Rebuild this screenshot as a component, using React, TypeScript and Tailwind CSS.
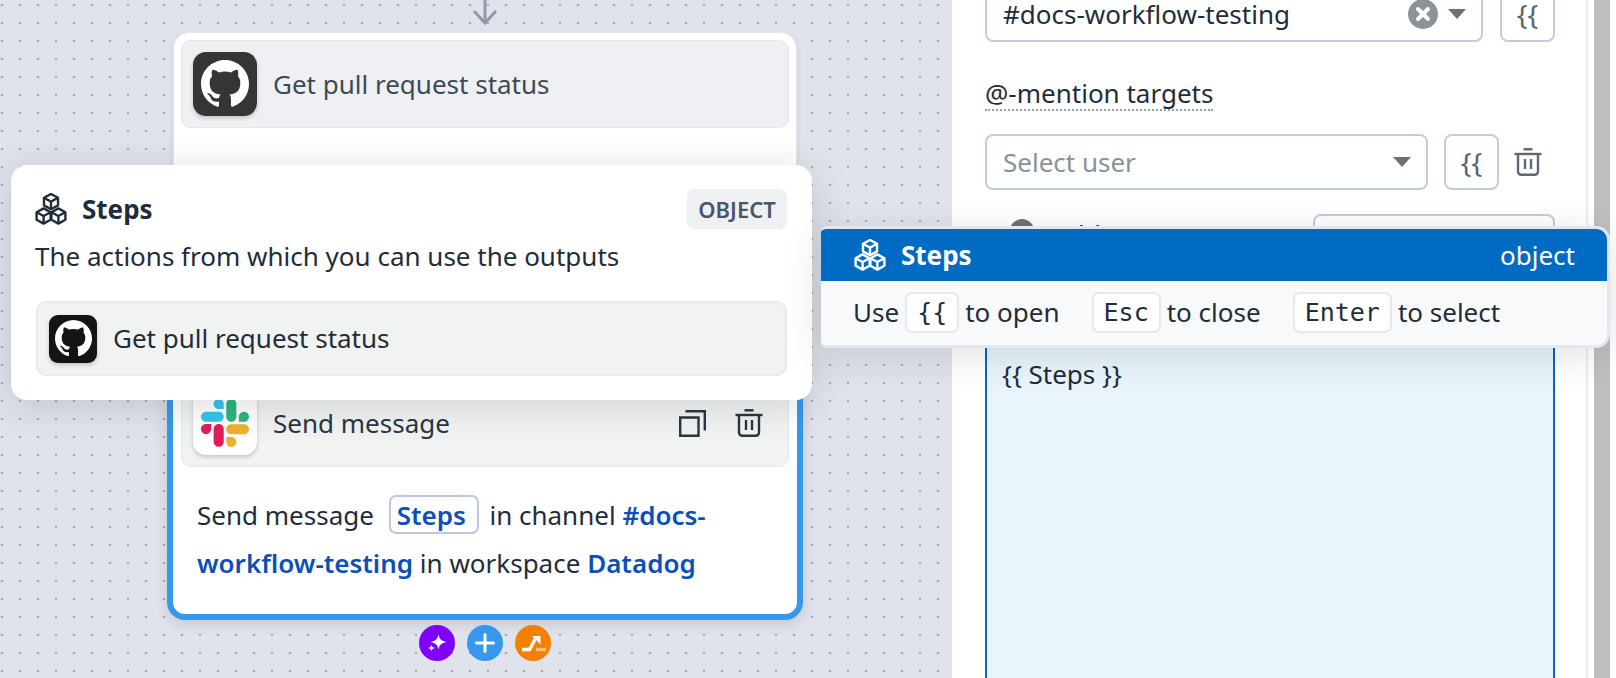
import React from "react";

const GH =
  "M12 0C5.37 0 0 5.37 0 12c0 5.3 3.44 9.8 8.21 11.39.6.11.82-.26.82-.58 0-.29-.01-1.04-.02-2.05-3.34.73-4.04-1.61-4.04-1.61-.55-1.39-1.34-1.76-1.34-1.76-1.09-.75.08-.73.08-.73 1.21.08 1.84 1.24 1.84 1.24 1.07 1.84 2.81 1.31 3.5 1 .11-.78.42-1.31.76-1.61-2.67-.3-5.47-1.33-5.47-5.93 0-1.31.47-2.38 1.24-3.22-.12-.3-.54-1.52.12-3.18 0 0 1.01-.32 3.3 1.23a11.5 11.5 0 0 1 3-.4c1.02 0 2.05.14 3 .4 2.29-1.55 3.3-1.23 3.3-1.23.66 1.66.24 2.88.12 3.18.77.84 1.24 1.91 1.24 3.22 0 4.61-2.81 5.62-5.48 5.92.43.37.81 1.1.81 2.22 0 1.6-.01 2.9-.01 3.29 0 .32.22.7.83.58C20.57 21.8 24 17.3 24 12c0-6.63-5.37-12-12-12z";

function GithubMark({ size }: { size: number }) {
  return (
    <svg width={size} height={size} viewBox="0 0 24 24" fill="#fff">
      <path d={GH} />
    </svg>
  );
}

function Cubes({ color }: { color: string }) {
  const cube = (cx: number, cy: number) => {
    const w = 7;
    const h = 3.8;
    return (
      <g key={`${cx}-${cy}`}>
        <path d={`M${cx} ${cy - 2 * h}L${cx + w} ${cy - h}V${cy + h}L${cx} ${cy + 2 * h}L${cx - w} ${cy + h}V${cy - h}Z`} />
        <path d={`M${cx - w} ${cy - h}L${cx} ${cy}L${cx + w} ${cy - h}M${cx} ${cy}V${cy + 2 * h}`} />
      </g>
    );
  };
  return (
    <svg width="32" height="32" viewBox="0 0 32 32" fill="none" stroke={color} strokeWidth="2.4" strokeLinejoin="round">
      {cube(16, 8.6)}
      {cube(8.6, 23)}
      {cube(23.4, 23)}
    </svg>
  );
}

function Slack() {
  return (
    <svg width="48" height="48" viewBox="0 0 125.4 125.4">
      <path d="M26.4 78.6c0 7.3-5.9 13.2-13.2 13.2S0 85.9 0 78.6s5.9-13.2 13.2-13.2h13.2v13.2zm6.6 0c0-7.3 5.9-13.2 13.2-13.2s13.2 5.9 13.2 13.2v33c0 7.3-5.9 13.2-13.2 13.2S33 118.9 33 111.6v-33z" fill="#E01E5A" />
      <path d="M46.2 26.4c-7.3 0-13.2-5.9-13.2-13.2S38.9 0 46.2 0s13.2 5.9 13.2 13.2v13.2H46.2zm0 6.7c7.3 0 13.2 5.9 13.2 13.2s-5.9 13.2-13.2 13.2H13.2C5.9 59.5 0 53.6 0 46.3s5.9-13.2 13.2-13.2h33z" fill="#36C5F0" />
      <path d="M99 46.3c0-7.3 5.9-13.2 13.2-13.2s13.2 5.9 13.2 13.2-5.9 13.2-13.2 13.2H99V46.3zm-6.6 0c0 7.3-5.9 13.2-13.2 13.2s-13.2-5.9-13.2-13.2v-33C66 5.9 71.9 0 79.2 0s13.2 5.9 13.2 13.2v33.1z" fill="#2EB67D" />
      <path d="M79.2 99c7.3 0 13.2 5.9 13.2 13.2s-5.9 13.2-13.2 13.2S66 119.5 66 112.2V99h13.2zm0-6.6c-7.3 0-13.2-5.9-13.2-13.2S71.9 66 79.2 66h33c7.3 0 13.2 5.9 13.2 13.2s-5.9 13.2-13.2 13.2h-33z" fill="#ECB22E" />
    </svg>
  );
}

function Trash({ color }: { color: string }) {
  return (
    <svg width="28" height="28" viewBox="0 0 28 28" fill="none" stroke={color} strokeWidth="2.4">
      <path d="M9.5 1.3h9" />
      <path d="M0.5 6h27" />
      <path d="M4 6v17.5a3.3 3.3 0 0 0 3.3 3.3h13.4a3.3 3.3 0 0 0 3.3-3.3V6" />
      <path d="M11 11v10M17 11v10" />
    </svg>
  );
}

function Caret() {
  return (
    <svg width="18" height="10" viewBox="0 0 18 10" fill="#69727b">
      <path d="M0 0h18L9 10z" />
    </svg>
  );
}

function Braces() {
  return (
    <button className="flex h-[56px] w-[55px] shrink-0 items-center justify-center rounded-[8px] border-2 border-[#c2cbe0] bg-white text-[28px] leading-none text-[#59636d]">
      {"{{"}
    </button>
  );
}

function Kbd({ children }: { children: React.ReactNode }) {
  return (
    <span className="flex h-[41px] items-center rounded-[7px] border-2 border-[#e6e8f0] bg-white px-[10px] font-['DejaVu_Sans_Mono',monospace] text-[25px] leading-none text-[#1f2d3a]">
      {children}
    </span>
  );
}

export default function App() {
  return (
    <div className="relative flex h-[678px] w-[1616px] overflow-hidden bg-white font-['Noto_Sans',sans-serif] text-[26px] text-[#1f2d3a]">
      {/* Canvas */}
      <div className="relative h-full w-[952px] shrink-0 bg-[#e0e3ec] bg-[radial-gradient(circle,#a6a9b3_1px,transparent_1.3px)] bg-[size:18px_18px] bg-[position:-7px_-4px]">
        <svg className="absolute left-[471px] top-0" width="28" height="26" viewBox="0 0 28 26" fill="none" stroke="#9299a8" strokeWidth="3">
          <path d="M14 0v23M3 11l11 12 11-12" />
        </svg>

        {/* Top node */}
        <div className="absolute left-[173px] top-[32px] h-[400px] w-[624px] rounded-[16px] border border-[#e4e6ec] bg-white px-[7px] pt-[7px] shadow-[0_2px_6px_rgba(0,0,0,0.08)]">
          <div className="flex h-[88px] items-center gap-[16px] rounded-[10px] border border-[#e3e5ea] bg-[#eff0f3] pl-[11px]">
            <span className="flex h-[64px] w-[64px] items-center justify-center rounded-[13px] bg-[#353535] shadow-[0_2px_4px_rgba(0,0,0,0.2)]">
              <GithubMark size={48} />
            </span>
            <span className="text-[#3e4a56]">Get pull request status</span>
          </div>
        </div>

        {/* Selected node */}
        <div className="absolute left-[167px] top-[365px] h-[255px] w-[636px] rounded-[18px] border-[6px] border-[#3598ec] bg-white shadow-[0_4px_14px_rgba(0,0,0,0.12)]">
          <div className="mx-[8px] mt-[8px] flex h-[88px] items-center rounded-[10px] border border-[#e5e7e9] bg-[#f1f3f3] pl-[11px] pr-[25px]">
            <span className="flex h-[64px] w-[64px] items-center justify-center rounded-[13px] bg-white shadow-[0_2px_4px_rgba(0,0,0,0.2)]">
              <Slack />
            </span>
            <span className="ml-[16px] text-[#2a3640]">Send message</span>
            <span className="ml-auto flex items-center gap-[29px]">
              <svg width="27" height="27" viewBox="0 0 27 27" fill="none" stroke="#2a3640" strokeWidth="2.4">
                <path d="M1.2 7.5h18.3v18.3H1.2z" />
                <path d="M6.5 1.2h19.3v19.3" />
              </svg>
              <Trash color="#2a3640" />
            </span>
          </div>
          <div className="pl-[24px] pr-[40px] pt-[24px] leading-[48px]">
            Send message{" "}
            <span className="ml-[8px] mr-[4px] inline-block h-[39px] w-[90px] rounded-[7px] border-2 border-[#bcc6de] pl-[6px] align-baseline font-semibold leading-[37px] text-[#0b50b8]">
              Steps
            </span>{" "}
            in channel <span className="font-semibold text-[#0b50b8]">#docs-workflow-testing</span> in workspace{" "}
            <span className="font-semibold text-[#0b50b8]">Datadog</span>
          </div>
        </div>

        {/* Node actions */}
        <div className="absolute left-[419px] top-[625px] flex gap-[12px]">
          <span className="flex h-[36px] w-[36px] items-center justify-center rounded-full bg-[#8000ff]">
            <svg width="36" height="36" viewBox="0 0 36 36" fill="#fff">
              <path d="M19.500 9c.8 5 2.600 7 8 8-5.400 1-7.200 3-8 8-.8-5-2.600-7-8-8 5.400-1 7.200-3 8-8z" />
              <path d="M12.500 19.500c.4 2.300 1.200 3.100 3.500 3.500-2.300.4-3.100 1.200-3.500 3.500-.4-2.300-1.200-3.100-3.500-3.500 2.300-.4 3.100-1.200 3.500-3.500z" />
            </svg>
          </span>
          <span className="flex h-[36px] w-[36px] items-center justify-center rounded-full bg-[#3598ec]">
            <svg width="36" height="36" viewBox="0 0 36 36" fill="none" stroke="#fff" strokeWidth="3" strokeLinecap="round">
              <path d="M18 9.500v17M9.500 18h17" />
            </svg>
          </span>
          <span className="flex h-[36px] w-[36px] items-center justify-center rounded-full bg-[#f58000]">
            <svg width="36" height="36" viewBox="0 0 36 36" fill="none" strokeWidth="3.4">
              <path d="M7 24.500h7.500l6-11" stroke="#fff" />
              <path d="M17 11h8.500v8.500z" fill="#fff" strokeWidth="0" />
              <path d="M21 24.500h10" stroke="#ffc080" />
            </svg>
          </span>
        </div>

        {/* Steps popover */}
        <div className="absolute left-[11px] top-[165px] z-20 h-[235px] w-[801px] rounded-[16px] bg-white pl-[24px] pr-[25px] shadow-[0_6px_40px_rgba(0,0,0,0.14)]">
          <div className="flex items-start justify-between pt-[24px]">
            <span className="flex h-[40px] items-center gap-[15px]">
              <Cubes color="#1f2d3a" />
              <span className="font-bold leading-none">Steps</span>
            </span>
            <span className="flex h-[40px] w-[100px] items-center justify-center rounded-[8px] bg-[#eff0f4] text-[22px] font-semibold leading-none text-[#4a5568]">
              OBJECT
            </span>
          </div>
          <p className="mt-[11px] leading-[32px]">The actions from which you can use the outputs</p>
          <div className="ml-[1px] mt-[29px] flex h-[75px] items-center gap-[16px] rounded-[10px] border-2 border-[#e8eaeb] bg-[#f1f3f3] pl-[11px]">
            <span className="flex h-[48px] w-[48px] items-center justify-center rounded-[9px] bg-[#141414] shadow-[0_2px_4px_rgba(0,0,0,0.2)]">
              <GithubMark size={37} />
            </span>
            <span>Get pull request status</span>
          </div>
        </div>
      </div>

      {/* Right panel */}
      <div className="flex h-full w-[636px] shrink-0 flex-col border-r-2 border-[#ececee] bg-white pl-[33px] pr-[31px]">
        <div className="-mt-[14px] flex gap-[17px]">
          <div className="flex h-[56px] w-[499px] items-center rounded-[8px] border-2 border-[#c2cbe0] bg-white pl-[16px] pr-[15px]">
            <span>#docs-workflow-testing</span>
            <span className="ml-auto flex items-center gap-[10px]">
              <svg width="30" height="30" viewBox="0 0 30 30">
                <circle cx="15" cy="15" r="15" fill="#8c9397" />
                <path d="M10 10l10 10M20 10L10 20" stroke="#fff" strokeWidth="4" strokeLinecap="round" />
              </svg>
              <Caret />
            </span>
          </div>
          <Braces />
        </div>

        <div className="mt-[35px] flex">
          <span className="border-b-2 border-dotted border-[#9aa0a8] leading-[32px]">@-mention targets</span>
        </div>

        <div className="mt-[23px] flex items-center">
          <div className="flex h-[56px] w-[443px] items-center justify-between rounded-[8px] border-2 border-[#c2cbe0] bg-white pl-[16px] pr-[15px]">
            <span className="text-[#8a9299]">Select user</span>
            <Caret />
          </div>
          <div className="ml-[16px]">
            <Braces />
          </div>
          <div className="ml-[15px]">
            <Trash color="#5f6973" />
          </div>
        </div>

        <div className="mt-[24px] flex h-[55px] shrink-0 items-start justify-between">
          <div className="flex items-start gap-[15px] pl-[25px] pt-[5px]">
            <span className="h-[24px] w-[24px] rounded-full bg-[#6b7178]" />
            <span className="pt-[3px] leading-[24px]">Ashley Hutton</span>
          </div>
          <div className="h-[55px] w-[242px] rounded-[8px] border-2 border-[#c2cbe0] pl-[20px] leading-[38px]">
            Admin
          </div>
        </div>

        <div className="mt-[66px] h-[400px] shrink-0 border-2 border-[#0069c2] bg-[#e9f5fb] pl-[15px] pt-[21px] leading-[32px]">
          {"{{ Steps }}"}
        </div>
      </div>

      {/* Scrollbar */}
      <div className="ml-[6px] h-full w-[16px] shrink-0 bg-[#bfbfbf]" />

      {/* Keyboard hint */}
      <div className="absolute left-[821px] top-[226px] z-30 h-[122px] w-[789px] overflow-hidden rounded-l-[6px] rounded-r-[14px] border-[3px] border-l-0 border-[#e5e6ef] bg-[#f8f9fb] shadow-[0_8px_40px_rgba(0,0,0,0.12)]">
        <div className="flex h-[52px] items-center justify-between bg-[#006bc2] pl-[33px] pr-[32px] text-white">
          <span className="flex items-center gap-[15px]">
            <Cubes color="#ffffff" />
            <span className="font-bold leading-none">Steps</span>
          </span>
          <span className="leading-none">object</span>
        </div>
        <div className="flex h-[63px] items-center gap-[32px] pl-[32px]">
          <span className="flex items-center gap-[6px]">
            Use <Kbd>{"{{"}</Kbd> to open
          </span>
          <span className="flex items-center gap-[6px]">
            <Kbd>Esc</Kbd> to close
          </span>
          <span className="flex items-center gap-[6px]">
            <Kbd>Enter</Kbd> to select
          </span>
        </div>
      </div>
    </div>
  );
}
